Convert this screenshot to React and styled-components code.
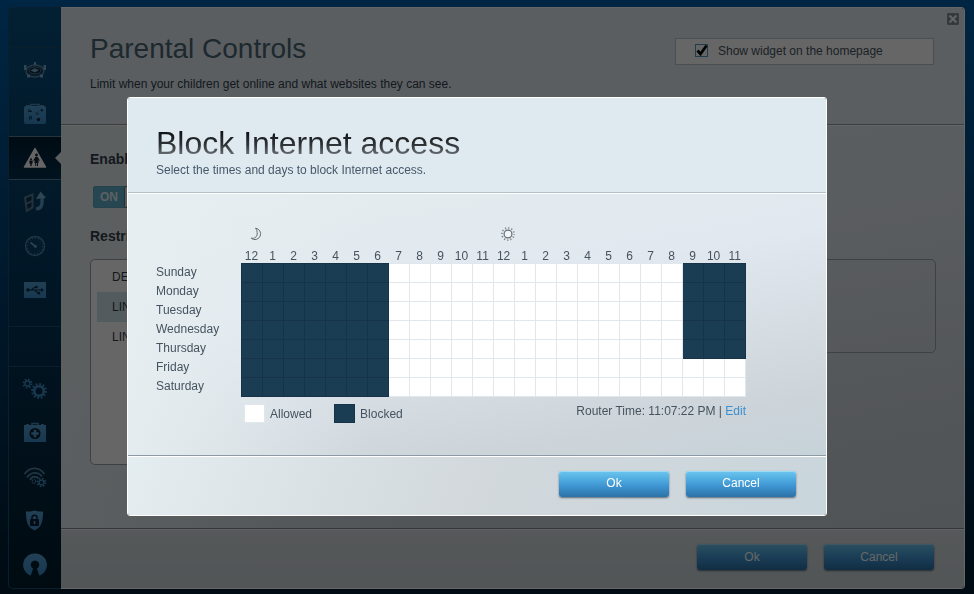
import React, { useState } from "react"
import styled, { createGlobalStyle, css } from "styled-components"

const days = [
  "Sunday",
  "Monday",
  "Tuesday",
  "Wednesday",
  "Thursday",
  "Friday",
  "Saturday",
]
const hours = Array.from({ length: 24 }, (_, i) => i % 12 || 12)
const devices = ["DELL", "LINDA", "LINUX"]

const isBlocked = (day, hour) => hour < 7 || (hour > 20 && day < 5)

export default function App() {
  const [showWidget, setShowWidget] = useState(true)

  return (
    <>
      <GlobalStyle />
      <Page>
        <Sidebar />
        <Panel>
          <PanelHeader>
            <div>
              <PageTitle>Parental Controls</PageTitle>
              <PageText>
                Limit when your children get online and what websites they can
                see.
              </PageText>
            </div>
            <WidgetLabel>
              <CheckWrapper>
                <Checkbox
                  type="checkbox"
                  checked={showWidget}
                  onChange={e => setShowWidget(e.target.checked)}
                />
                {showWidget && <CheckIcon />}
              </CheckWrapper>
              <span>Show widget on the homepage</span>
            </WidgetLabel>
            <CloseButton aria-label="Close">
              <svg width="10" height="10" viewBox="0 0 10 10">
                <path d="M1.500 1.500l7 7M8.500 1.500l-7 7" stroke="#f4f8fa" strokeWidth="2.200" />
              </svg>
            </CloseButton>
          </PanelHeader>
          <PanelBody>
            <SectionTitle>Enable</SectionTitle>
            <Toggle aria-pressed="true">
              <span>ON</span>
              <i />
            </Toggle>
            <SectionTitle>Restrict</SectionTitle>
            <Columns>
              <DeviceList>
                {devices.map((name, i) => (
                  <Device key={name} $selected={i === 1}>
                    {name}
                  </Device>
                ))}
              </DeviceList>
              <DetailBox />
            </Columns>
          </PanelBody>
          <PanelFooter>
            <Button>Ok</Button>
            <Button>Cancel</Button>
          </PanelFooter>
        </Panel>
      </Page>
      <Overlay>
        <ScheduleDialog />
      </Overlay>
    </>
  )
}

function ScheduleDialog() {
  return (
    <Dialog role="dialog" aria-labelledby="schedule-title">
      <DialogHeader>
        <DialogTitle id="schedule-title">Block Internet access</DialogTitle>
        <DialogText>
          Select the times and days to block Internet access.
        </DialogText>
      </DialogHeader>
      <DialogBody>
        <Schedule>
          <colgroup>
            <DayCol />
            {hours.map((_, i) => (
              <HourCol key={i} />
            ))}
          </colgroup>
          <thead>
            <tr>
              <td />
              <PeriodHead colSpan={12} aria-label="AM">
                <MoonIcon />
              </PeriodHead>
              <PeriodHead colSpan={12} aria-label="PM">
                <SunIcon />
              </PeriodHead>
            </tr>
            <tr>
              <td />
              {hours.map((hour, i) => (
                <HourHead key={i}>{hour}</HourHead>
              ))}
            </tr>
          </thead>
          <tbody>
            {days.map((day, d) => (
              <tr key={day}>
                <DayHead>{day}</DayHead>
                {hours.map((_, h) => (
                  <Cell key={h} $blocked={isBlocked(d, h)} />
                ))}
              </tr>
            ))}
          </tbody>
        </Schedule>
        <ScheduleFooter>
          <LegendItem>
            <Swatch />
            Allowed
          </LegendItem>
          <LegendItem>
            <Swatch $blocked />
            Blocked
          </LegendItem>
          <RouterTime>
            Router Time: 11:07:22 PM | <a href="#time">Edit</a>
          </RouterTime>
        </ScheduleFooter>
      </DialogBody>
      <DialogFooter>
        <Button>Ok</Button>
        <Button>Cancel</Button>
      </DialogFooter>
    </Dialog>
  )
}

function Sidebar() {
  return (
    <Nav>
      <NavSpacer />
      <NavGroup>
        <NavItem href="#devices" aria-label="Device list">
          <NetworkIcon />
        </NavItem>
        <NavItem href="#guest" aria-label="Guest access">
          <SuitcaseIcon />
        </NavItem>
        <NavItem href="#parental" aria-label="Parental controls" $active>
          <FamilyIcon />
        </NavItem>
        <NavItem href="#media" aria-label="Media prioritization">
          <MediaIcon />
        </NavItem>
        <NavItem href="#speed" aria-label="Speed test">
          <GaugeIcon />
        </NavItem>
        <NavItem href="#usb" aria-label="USB storage">
          <UsbIcon />
        </NavItem>
      </NavGroup>
      <NavSpacer />
      <NavGroup>
        <NavItem href="#connectivity" aria-label="Connectivity">
          <GearsIcon />
        </NavItem>
        <NavItem href="#troubleshooting" aria-label="Troubleshooting">
          <KitIcon />
        </NavItem>
        <NavItem href="#wireless" aria-label="Wireless">
          <WirelessIcon />
        </NavItem>
        <NavItem href="#security" aria-label="Security">
          <ShieldIcon />
        </NavItem>
        <NavItem href="#vpn" aria-label="OpenVPN">
          <VpnIcon />
        </NavItem>
      </NavGroup>
    </Nav>
  )
}

function Icon({ children }) {
  return (
    <svg width="24" height="24" viewBox="0 0 24 24">
      <defs>
        <linearGradient id="blue" x1="0" y1="0" x2="0" y2="24" gradientUnits="userSpaceOnUse">
          <stop offset="0" stopColor="#5aa4d6" />
          <stop offset="1" stopColor="#3488c6" />
        </linearGradient>
      </defs>
      {children}
    </svg>
  )
}

function NetworkIcon() {
  return (
    <Icon>
      <ellipse cx="12" cy="13" rx="9" ry="6" fill="#123f60" stroke="#5d88a8" strokeWidth="1.500" />
      <ellipse cx="12" cy="12.500" rx="6" ry="3.500" fill="#0a2c46" stroke="#4d7b9b" />
      <path d="M7.500 12.500l4-2.200 4.500 1.700-4 2.500z" fill="#7cb0d4" />
      <path d="M1 7h2.500v5H1zM20.500 7H23v5h-2.500zM11 4h2v3h-2zM4 16.500h3v3H4zM17 16.500h3v3h-3z" fill="#7cb0d4" />
    </Icon>
  )
}

function SuitcaseIcon() {
  return (
    <Icon>
      <path d="M8 4V2.500h8V4" fill="none" stroke="#4a8cba" strokeWidth="1.500" />
      <rect x="3" y="3" width="4" height="2" fill="#4a8cba" />
      <rect x="17" y="3" width="4" height="2" fill="#4a8cba" />
      <rect x="1" y="4" width="22" height="18" rx="2" fill="url(#blue)" />
      <g fill="none" stroke="#0b3c5e">
        <path d="M5 8h2.500l1 1.500H5M18 7.500h1.500v1.500H18zM15 9.500l-2 2 1.500 1.500 1.500-1.500M6.500 14.500h2v2.500h-2z" />
      </g>
      <circle cx="15.500" cy="17.500" r="1.700" fill="#062238" />
    </Icon>
  )
}

function FamilyIcon() {
  return (
    <Icon>
      <path d="M12 2.500L22.500 21h-21z" fill="#fff" stroke="#fff" strokeWidth="1.500" strokeLinejoin="round" />
      <g fill="#12222e">
        <circle cx="13.500" cy="9" r="1.400" />
        <path d="M12.500 10.700h2l2.300 3.800-.8.600-1.300-1.700 1.300 3.100H15V20h-1v-3h-.8v3h-1v-3.500h-1.200l1.300-3.100-1.300 1.700-.8-.6z" />
        <circle cx="8" cy="13.200" r="1" />
        <path d="M6.400 14.600h3.200v2.900h-.7V20h-.7v-2h-.4v2h-.7v-2.500h-.7z" />
      </g>
    </Icon>
  )
}

function MediaIcon() {
  return (
    <Icon>
      <path d="M1 7l9.500-4v15L3 22.500z" fill="#547c98" />
      <path d="M3.200 8.200L8.500 6v4.300L3.700 12.500zM4 14.500l4.500-2.300v4.300L4.500 19.300z" fill="#12344b" />
      <path d="M13 18.500c5 .8 6.500-3 6-10.500" fill="none" stroke="#5f9bc4" strokeWidth="3.400" />
      <path d="M13 9l4.500-7.500L23 8z" fill="#7cb0d4" />
    </Icon>
  )
}

function GaugeIcon() {
  return (
    <Icon>
      <circle cx="12" cy="12" r="9.500" fill="#0c3f66" stroke="#4a8cba" strokeWidth="1.300" />
      <circle cx="12" cy="12" r="7.800" fill="none" stroke="#4a7c9e" strokeWidth="1.400" strokeDasharray="1 2.060" />
      <path d="M12.500 12.500L7.500 8.500" stroke="#5fa6d4" strokeWidth="1.800" />
      <circle cx="12.500" cy="12.500" r="1.400" fill="#5fa6d4" />
    </Icon>
  )
}

function UsbIcon() {
  return (
    <Icon>
      <rect x="1" y="4" width="22" height="16" fill="url(#blue)" />
      <g fill="none" stroke="#082b44" strokeWidth="1.200">
        <path d="M5 12h14M8 12c2 0 2-3 5-3M11 12c2 0 2 3 5 3" />
      </g>
      <g fill="#082b44">
        <circle cx="5" cy="12" r="1.800" />
        <circle cx="13.500" cy="9" r="1.300" />
        <rect x="14.500" y="13.800" width="2.600" height="2.600" />
        <path d="M18 10l3 2-3 2z" />
      </g>
    </Icon>
  )
}

// A ring with `teeth` dashes running around its outer edge
function Gear({ x, y, r, width, teeth }) {
  const outer = r + width / 2 + 0.8
  const step = (Math.PI * outer) / teeth
  return (
    <g fill="none" stroke="#3f8cc4">
      <circle cx={x} cy={y} r={r} strokeWidth={width} />
      <circle
        cx={x}
        cy={y}
        r={outer}
        strokeWidth="2"
        strokeDasharray={`${step} ${step}`}
      />
    </g>
  )
}

function GearsIcon() {
  return (
    <Icon>
      <Gear x={4.5} y={6.5} r={2.5} width={1.3} teeth={8} />
      <Gear x={16} y={14} r={4.8} width={2.6} teeth={12} />
    </Icon>
  )
}

function KitIcon() {
  return (
    <Icon>
      <path d="M9 4V2.500h6V4" fill="none" stroke="#4a8cba" strokeWidth="1.500" />
      <path d="M3 3h3v2H3zM18 3h3v2h-3z" fill="#4a8cba" />
      <rect x="1" y="4" width="22" height="17" fill="url(#blue)" />
      <circle cx="12" cy="12.500" r="5.500" fill="#082030" />
      <path d="M12 8.800v7.400M8.300 12.500h7.400" stroke="#519fd2" strokeWidth="2.600" />
    </Icon>
  )
}

function WirelessIcon() {
  return (
    <Icon>
      <g fill="none" stroke="#5286a8" strokeWidth="1.900">
        <path d="M1.500 9C7 1.500 16 1.500 21.500 9" />
        <path d="M4 12.500C8 6.500 15 6.500 19 11.500" />
        <path d="M7 15c2-4 6-4 8.500-1.500" />
      </g>
      <circle cx="11" cy="16.500" r="1.800" fill="none" stroke="#5286a8" strokeWidth="1.200" strokeDasharray="1.200 .6" />
      <Gear x={18.5} y={17.5} r={2.4} width={1.2} teeth={8} />
    </Icon>
  )
}

function ShieldIcon() {
  return (
    <Icon>
      <path d="M3 2.500c3 0 6 0 8.500-1C14 2.500 17 2.500 20 2.500 20 12 19 18 11.500 21.500 4 18 3 12 3 2.500z" fill="url(#blue)" />
      <path d="M9 10.500V8.500c0-3 5-3 5 0v2" fill="none" stroke="#082030" strokeWidth="1.500" />
      <rect x="7" y="10" width="9" height="7" rx="1" fill="#082030" />
      <path d="M11.500 12v3" stroke="#519fd2" strokeWidth="1.600" />
    </Icon>
  )
}

function VpnIcon() {
  return (
    <Icon>
      <path
        d="M12 .5a11.500 11.500 0 0 0-5.500 21.800c.8.400 1.300.2 1.600-.7l2-6.100a4.200 4.200 0 1 1 3.800 0l2 6.100c.3.900.8 1.100 1.600.7A11.500 11.500 0 0 0 12 .5z"
        fill="url(#blue)"
      />
    </Icon>
  )
}

function CheckIcon() {
  return (
    <svg width="13" height="13" viewBox="0 0 13 13">
      <path d="M2.500 6.500L5.500 10 11.500 1.500" fill="none" stroke="#02080c" strokeWidth="2.700" />
    </svg>
  )
}

function MoonIcon() {
  return (
    <svg width="14" height="14" viewBox="0 0 14 14">
      <path
        d="M6.500 1.200A5.700 5.700 0 1 1 2.200 11.200C5.500 11.800 8 10 8.200 7 8.300 4.500 7.800 2.800 6.500 1.200z"
        fill="#e9eef1"
        stroke="#62696f"
      />
    </svg>
  )
}

function SunIcon() {
  return (
    <svg width="14" height="14" viewBox="0 0 14 14">
      <circle cx="7" cy="7" r="3.900" fill="#f2f5f7" stroke="#666d73" strokeWidth="1.200" />
      <circle cx="7" cy="7" r="6.100" fill="none" stroke="#858b90" strokeWidth="1.800" strokeDasharray="1.200 1.994" strokeDashoffset=".6" />
    </svg>
  )
}

const GlobalStyle = createGlobalStyle`
  * {
    box-sizing: border-box;
  }
  body {
    margin: 0;
    background: #00192d;
    color: #45535f;
    font: 12px/16px "Liberation Sans", Arial, sans-serif;
  }
  h1, h2, p, ul {
    margin: 0;
    padding: 0;
    font-weight: normal;
  }
  button {
    font: inherit;
  }
`

const Page = styled.div`
  display: flex;
  min-height: 100vh;
  padding: 7px 9px 5px 8px;
  background: linear-gradient(180deg, #005fa8 0%, #00467c 35%, #001c30 100%);
`

const Nav = styled.nav`
  flex: 0 0 53px;
  background: linear-gradient(180deg, #08507f 0%, #04395f 45%, #021c2c 100%);
  border: 1px solid #174f75;
  border-right: 0;
  border-radius: 5px 0 0 5px;
`
const NavSpacer = styled.div`
  height: 40px;
  border-bottom: 1px solid #1c4d6d;
`
const NavGroup = styled.div`
  &:not(:last-child) {
    padding-bottom: 14px;
    border-bottom: 1px solid #1c4d6d;
  }
`
const NavItem = styled.a`
  position: relative;
  display: flex;
  align-items: center;
  justify-content: center;
  height: 44px;

  ${p =>
    p.$active &&
    css`
      background: linear-gradient(180deg, #021e31, #03314f);
      border: solid #5a7f98;
      border-width: 1px 0;

      &::after {
        content: "";
        position: absolute;
        right: 0;
        top: 15px;
        border: 6px solid transparent;
        border-left: 0;
        border-right-color: #e8eff2;
      }
    `}
`

const panelShade = css`
  background:
    linear-gradient(
      90deg,
      rgba(230, 238, 241, 0.9) 0%,
      rgba(230, 238, 241, 0) 35%
    ),
    linear-gradient(170deg, #e5edef 0%, #e1e8ef 40%, #ccd4d9 85%, #c6d3d9 100%);
`

const Panel = styled.main`
  flex: 1;
  display: flex;
  flex-direction: column;
  border: 1px solid #fff;
  border-left: 0;
  border-radius: 0 4px 4px 0;
  overflow: hidden;
`
const PanelHeader = styled.header`
  position: relative;
  display: flex;
  justify-content: space-between;
  align-items: flex-start;
  height: 117px;
  padding: 25px 30px 0 29px;
  background: #e2ecf1;
  border-bottom: 1px solid #909ba3;
`
const PageTitle = styled.h1`
  color: #4a6673;
  font-size: 28px;
  line-height: 32px;
`
const PageText = styled.p`
  margin-top: 11px;
  color: #33404c;
`
const WidgetLabel = styled.label`
  display: flex;
  align-items: center;
  gap: 10px;
  width: 259px;
  height: 27px;
  margin-top: 5px;
  padding: 0 19px 2px;
  background: #fff;
  border: 1px solid #b8c6d0;
  line-height: 14px;
`
const CheckWrapper = styled.span`
  display: grid;

  > * {
    grid-area: 1 / 1;
  }
  svg {
    pointer-events: none;
  }
`
const Checkbox = styled.input`
  appearance: none;
  width: 13px;
  height: 13px;
  margin: 0;
  background: #fff;
  border: 1px solid #4f9ab8;
`
const CloseButton = styled.button`
  position: absolute;
  top: 5px;
  right: 5px;
  display: flex;
  align-items: center;
  justify-content: center;
  width: 12px;
  height: 12px;
  padding: 0;
  background: #7c8a94;
  border: 1px solid #8796a0;
  border-radius: 1px;

  svg {
    flex: none;
  }
`
const PanelBody = styled.section`
  flex: 1;
  padding: 25px 28px 20px 29px;
  border-top: 1px solid #fff;
  ${panelShade}
`
const SectionTitle = styled.h2`
  color: #33404f;
  font-size: 14px;
  line-height: 16px;
  font-weight: bold;
`
const Toggle = styled.button`
  display: flex;
  align-items: center;
  width: 62px;
  height: 22px;
  margin: 19px 3px 20px;
  padding: 0;
  background: #5fb0cb;
  border: 1px solid #5fa5bf;
  border-radius: 2px;
  color: #e4f2f8;
  font-weight: bold;

  span {
    flex: 1;
    text-align: center;
  }
  i {
    width: 30px;
    height: 22px;
    background: #dfe5e8;
    border: 1px solid #66727a;
    border-radius: 2px;
  }
`
const Columns = styled.div`
  display: grid;
  grid-template-columns: 200px 1fr;
  align-items: start;
  gap: 20px;
  margin-top: 15px;
`
const DetailBox = styled.div`
  height: 94px;
  border: 1px solid #93a3ad;
  border-radius: 5px;
`
const DeviceList = styled.ul`
  height: 206px;
  padding: 2px 6px;
  list-style: none;
  background: #fff;
  border: 1px solid #93a3ad;
  border-radius: 5px;
`
const Device = styled.li`
  padding: 7px 15px;
  color: #333e4a;
  background: ${p => (p.$selected ? "#cde3ec" : "none")};
`
const PanelFooter = styled.footer`
  display: flex;
  justify-content: flex-end;
  gap: 17px;
  padding: 15px 30px 18px;
  background: linear-gradient(180deg, #d6dcde, #cdd6d9);
  border-top: 1px solid #7e8a92;
  box-shadow: inset 0 1px #f4f8fa;
`

const Button = styled.button`
  width: 110px;
  height: 26px;
  padding: 0 0 1px;
  color: #fff;
  background: linear-gradient(
    180deg,
    #6cc6ef 0%,
    #4aa5dd 40%,
    #3d93d0 60%,
    #2c72a6 100%
  );
  border: 0;
  border-radius: 3px;
  box-shadow:
    inset 0 1px #9adcf7,
    0 1px 2px #5c6a76;
`

const Overlay = styled.div`
  position: fixed;
  inset: 0;
  display: flex;
  justify-content: center;
  align-items: flex-start;
  padding: 97px 20px 0 0;
  background: rgba(0, 0, 0, 0.6);
`
const Dialog = styled.div`
  width: 700px;
  border: 1px solid #fff;
  border-radius: 3px;
  overflow: hidden;
`
const DialogHeader = styled.header`
  padding: 27px 28px 14px;
  background: #dfeaf0;
  border-bottom: 1px solid #b4c1ca;
`
const DialogTitle = styled.h2`
  font-size: 32px;
  line-height: 36px;
  color: transparent;
  background: linear-gradient(180deg, #0c0e10 15%, #303436 55%, #6c7277 85%);
  -webkit-background-clip: text;
  background-clip: text;
`
const DialogText = styled.p`
  margin-top: 1px;
  color: #47586a;
`
const DialogBody = styled.section`
  padding: 33px 28px 31px;
  border-top: 1px solid #fff;
  ${panelShade}
`
const DialogFooter = styled.footer`
  display: flex;
  justify-content: flex-end;
  gap: 17px;
  padding: 15px 30px 18px;
  border-top: 1px solid #8e99a6;
  box-shadow: inset 0 1px #fff;
  background: linear-gradient(110deg, #e4edf0 0%, #d2d8dc 50%, #c9d6dc 100%);
`

const Schedule = styled.table`
  width: 590px;
  table-layout: fixed;
  border-collapse: collapse;

  th,
  td {
    padding: 0;
  }
`
const DayCol = styled.col`
  width: 85px;
`
const HourCol = styled.col`
  width: 21px;
`
const PeriodHead = styled.th`
  height: 20px;
  vertical-align: top;

  && {
    padding-left: 8px;
  }
  svg {
    display: block;
  }
`
const HourHead = styled.th`
  height: 16px;
  font-weight: normal;
  line-height: 14px;
  vertical-align: bottom;
`
const DayHead = styled.th`
  height: 19px;
  font-weight: normal;
  text-align: left;
  line-height: 18px;
  vertical-align: top;
`
const Cell = styled.td`
  background: ${p => (p.$blocked ? "#1b3d54" : "#fff")};
  border: 1px solid ${p => (p.$blocked ? "#163347" : "#e0e8ee")};
`
const ScheduleFooter = styled.div`
  display: flex;
  align-items: flex-start;
  gap: 22px;
  width: 590px;
  margin-top: 7px;
  padding-left: 88px;
`
const LegendItem = styled.span`
  display: flex;
  align-items: center;
  gap: 5px;
  line-height: 20px;
`
const Swatch = styled.i`
  width: 21px;
  height: 19px;
  background: ${p => (p.$blocked ? "#1b3d54" : "#fff")};
  border: 1px solid ${p => (p.$blocked ? "#163347" : "#e0e8ee")};
`
const RouterTime = styled.span`
  margin-left: auto;
  line-height: 14px;

  a {
    color: #3d8fcf;
    text-decoration: none;
  }
`
